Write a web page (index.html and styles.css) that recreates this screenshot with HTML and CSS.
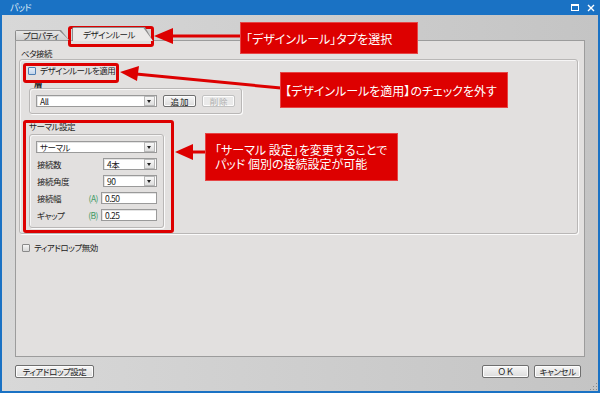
FILE: index.html
```html
<!DOCTYPE html>
<html lang="ja">
<head>
  <meta charset="UTF-8">
  <title>パッド</title>
  <link rel="stylesheet" href="styles.css">
</head>
<body>
  <div class="window">
    <div class="titlebar">
      <span class="title">パッド</span>
      <span class="winbtns">
        <svg width="8" height="7" viewBox="0 0 8 7"><rect x="0.5" y="0.5" width="7" height="6" fill="none" stroke="#fff"/><rect x="0" y="0" width="8" height="2" fill="#fff"/></svg>
        <svg width="8" height="8" viewBox="0 0 8 8"><path d="M1 1L7 7M7 1L1 7" stroke="#fff" stroke-width="1.4"/></svg>
      </span>
    </div>

    <div class="client">
      <div class="tabs">
        <div class="tab"><span class="face">プロパティ</span></div>
        <div class="tab active"><span class="face">デザインルール</span></div>
      </div>

      <div class="page">
        <div class="caption first">ベタ接続</div>
        <div class="group main">
          <div class="check"><span class="box blue"></span>デザインルールを適用</div>
          <div class="caption layer-cap">層</div>
          <div class="group layer">
            <div class="select layer-select"><span class="val">All</span><span class="drop"></span></div>
            <button class="btn">追 加</button>
            <button class="btn" disabled>削 除</button>
          </div>
          <div class="caption thermal-cap">サーマル設定</div>
          <div class="group thermal">
            <div class="select"><span class="val">サーマル</span><span class="drop"></span></div>
            <div class="row">
              <span class="lbl">接続数</span>
              <div class="select ctl"><span class="val">4本</span><span class="drop"></span></div>
            </div>
            <div class="row">
              <span class="lbl">接続角度</span>
              <div class="select ctl"><span class="val">90</span><span class="drop"></span></div>
            </div>
            <div class="row">
              <span class="lbl">接続幅</span>
              <span class="key">(A)</span>
              <div class="input ctl">0.50</div>
            </div>
            <div class="row">
              <span class="lbl">ギャップ</span>
              <span class="key">(B)</span>
              <div class="input ctl">0.25</div>
            </div>
          </div>
        </div>
        <div class="check tear"><span class="box"></span>ティアドロップ無効</div>
      </div>

      <div class="footer">
        <button class="btn wide">ティアドロップ設定</button>
        <span class="spacer"></span>
        <button class="btn dlg">Ｏ Ｋ</button>
        <button class="btn dlg">キャンセル</button>
      </div>
    </div>

    <div class="grip"></div>

    <!-- 注釈 -->
    <div class="mark mark-tab"></div>
    <div class="mark mark-check"></div>
    <div class="mark mark-thermal"></div>

    <svg class="arrows" width="600" height="393" viewBox="0 0 600 393">
      <g fill="#dd0000" stroke="#dd0000">
        <line x1="170" y1="36" x2="241" y2="36" stroke-width="3"/>
        <polygon points="154,36 173,28 173,44" stroke="none"/>
        <line x1="136" y1="74" x2="281" y2="88" stroke-width="3"/>
        <polygon points="120,72 137,81 139,66" stroke="none"/>
        <line x1="190" y1="152" x2="206" y2="152" stroke-width="3"/>
        <polygon points="175,152 193,144 193,160" stroke="none"/>
      </g>
    </svg>

    <div class="callout c1">「デザインルール」タブを選択</div>
    <div class="callout c2">【デザインルールを適用】のチェックを外す</div>
    <div class="callout c3">
      <span class="line">「サーマル 設定」を変更することで</span>
      <span class="line">パッド 個別の接続設定が可能</span>
    </div>
  </div>
</body>
</html>
```

FILE: styles.css
```css
body {
  margin: 0;
  font-family: "Noto Sans CJK JP", "Noto Sans", sans-serif;
  font-size: 8.5px;
  font-feature-settings: "palt";
  letter-spacing: -0.5px;
  color: #222;
}

.window {
  position: relative;
  width: 600px;
  height: 393px;
  display: flex;
  flex-direction: column;
  background: #1a72c4;
  overflow: hidden;
}

.titlebar {
  height: 15px;
  display: flex;
  align-items: center;
  padding: 0 4px 0 10px;
  color: #dfe9f5;
  font-size: 9px;
}

.title {
  flex: 1;
  line-height: 15px;
}

.winbtns {
  display: flex;
  gap: 8px;
  align-items: center;
  padding-right: 1px;
}

.client {
  flex: 1;
  display: flex;
  flex-direction: column;
  margin: 0 2px 2px 2px;
  padding: 12px 13px 0 13px;
  background: linear-gradient(to right, #d8d8d8, #c4c4c4);
}

/* タブ */
.tabs {
  height: 14px;
  display: flex;
  align-items: flex-end;
  margin-bottom: -1px;
  position: relative;
  z-index: 1;
}

.tab {
  width: 54px;
  height: 10px;
  margin-bottom: 1px;
  padding: 1px 0 0 1px;
  box-sizing: border-box;
  background: #8c8c8c;
  clip-path: polygon(0 0, calc(100% - 8px) 0, 100% 100%, 0 100%);
  border-radius: 2px 0 0 0;
}

.tab .face {
  display: block;
  height: 100%;
  line-height: 9px;
  padding-left: 7px;
  background: linear-gradient(to bottom, #e6e6e6, #d0d0d0);
  clip-path: polygon(0 0, calc(100% - 9.5px) 0, 100% 100%, 0 100%);
}

.tab.active {
  width: 81px;
  height: 14px;
  margin-left: 3px;
  margin-bottom: 0;
}

.tab.active .face {
  line-height: 13px;
  padding-left: 10px;
  background: #ebe9e8;
}

.page {
  flex: 1;
  background: #e2e0df;
  border: 1px solid #9c9c9c;
  padding: 7px 6px 0 3px;
}

.caption {
  line-height: 10px;
  height: 10px;
}

.caption.first {
  padding-left: 2px;
  margin-bottom: 1px;
}

.group {
  border: 1px solid #b9b7b6;
  border-radius: 3px;
  box-shadow: 1px 1px 0 #fbfbfb, inset 1px 1px 0 #f6f5f5;
}

.group.main {
  padding: 5px 9px 5px 9px;
}

.check {
  display: flex;
  align-items: center;
  height: 11px;
  line-height: 11px;
}

.box {
  width: 6px;
  height: 6px;
  border: 1px solid #8a8a8a;
  border-radius: 1px;
  background: linear-gradient(to bottom, #f4f4f4, #d8d8d8);
  margin-right: 4px;
}

.main > .check {
  margin-left: -1px;
}

.box.blue {
  border-color: #4f7fb3;
  background: linear-gradient(to bottom, #e6eef8, #c3d5ea);
}

.caption.layer-cap {
  margin-top: 2px;
  padding-left: 5px;
  font-weight: bold;
}

.group.layer {
  width: 199px;
  padding: 6px 6px;
  display: flex;
  align-items: center;
  gap: 6px;
}

.caption.thermal-cap {
  margin-top: 7px;
  margin-bottom: 3px;
}

.group.thermal {
  width: 121px;
  padding: 6px;
  display: flex;
  flex-direction: column;
  gap: 5px;
}

.select, .input {
  height: 10px;
  line-height: 10px;
  border: 1px solid #9a9a9a;
  background: #fff;
  display: flex;
  align-items: center;
  box-shadow: inset 1px 1px 0 #e4e4e4;
}

.select .val {
  flex: 1;
  padding-left: 3px;
}

.select .drop {
  width: 9px;
  height: 8px;
  margin-right: 1px;
  border: 1px solid #b8b8b8;
  background: linear-gradient(to bottom, #f8f8f8, #dedede);
  position: relative;
}

.select .drop::after {
  content: "";
  position: absolute;
  left: 2px;
  top: 3px;
  border-left: 2.5px solid transparent;
  border-right: 2.5px solid transparent;
  border-top: 3px solid #222;
}

.layer-select {
  width: 122px;
}

.input {
  padding-left: 3px;
}

.row {
  display: flex;
  align-items: center;
  height: 12px;
}

.row .lbl {
  flex: 1;
  padding-left: 1px;
}

.row .key {
  color: #3d9a64;
  margin-right: 3px;
}

.ctl {
  width: 52px;
}

.input.ctl {
  width: 51px;
}

.btn {
  font-family: inherit;
  font-size: 8.5px;
  font-feature-settings: "palt";
  letter-spacing: -0.5px;
  color: #222;
  height: 13px;
  line-height: 11px;
  padding: 0;
  border: 1px solid #6f6f6f;
  border-radius: 2px;
  background: linear-gradient(to bottom, #f7f7f7, #dcdcdc);
  box-shadow: inset 0 0 0 1px #fdfdfd;
}

.group.layer .btn {
  width: 34px;
  height: 12px;
}

.btn:disabled {
  color: #b0b0b0;
  border-color: #c2c2c2;
  background: #eaeaea;
}

.check.tear {
  margin-top: 8px;
  margin-left: 3px;
}

.footer {
  display: flex;
  align-items: center;
  gap: 5px;
  padding: 8px 4px 13px 0;
}

.spacer {
  flex: 1;
}

.btn.wide {
  width: 79px;
}

.btn.dlg {
  width: 47px;
}

.grip {
  position: absolute;
  right: 3px;
  bottom: 3px;
  width: 8px;
  height: 8px;
  background: radial-gradient(circle, #8a8a8a 0.8px, transparent 1px) 0 0 / 3px 3px;
  clip-path: polygon(100% 0, 100% 100%, 0 100%);
}

/* 注釈 */
.mark {
  position: absolute;
  border: 3px solid #dd0000;
  border-radius: 3px;
  box-sizing: border-box;
}

.mark-tab {
  left: 68px;
  top: 26px;
  width: 86px;
  height: 21px;
}

.mark-check {
  left: 23px;
  top: 63px;
  width: 96px;
  height: 20px;
}

.mark-thermal {
  left: 23px;
  top: 120px;
  width: 151px;
  height: 113px;
}

.arrows {
  position: absolute;
  left: 0;
  top: 0;
}

.callout {
  position: absolute;
  box-sizing: border-box;
  background: #dd0000;
  border: 1px solid #e64545;
  color: #fff;
  font-size: 12px;
  letter-spacing: 0;
  display: flex;
  align-items: center;
  white-space: nowrap;
}

.c1 {
  left: 240px;
  top: 22px;
  width: 178px;
  height: 32px;
  padding-left: 5px;
}

.c2 {
  left: 280px;
  top: 72px;
  width: 228px;
  height: 36px;
  padding-left: 4px;
}

.c3 {
  left: 205px;
  top: 133px;
  width: 193px;
  height: 48px;
  padding-left: 9px;
  flex-direction: column;
  align-items: flex-start;
  justify-content: center;
}

.c3 .line {
  display: block;
  height: 14px;
  line-height: 14px;
}
```
